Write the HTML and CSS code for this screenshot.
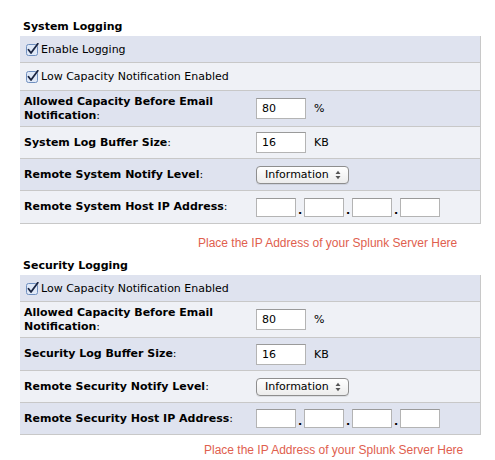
FILE: index.html
```html
<!DOCTYPE html>
<html>
<head>
<meta charset="utf-8">
<link rel="stylesheet" href="styles.css">
</head>
<body>
<section class="group">
  <h2 class="group-title">System Logging</h2>
  <div class="panel">
    <div class="row row-dark row-check">
      <label class="check"><svg class="cb" viewBox="0 0 13 13" width="13" height="13"><rect x="0.5" y="1.5" width="11" height="11" rx="2" fill="#dfe8f7" stroke="#6f8fbf"/><path d="M2.5 6.8 L5 10 L11.8 0.8" fill="none" stroke="#1a2440" stroke-width="1.8" stroke-linecap="round" stroke-linejoin="round"/></svg>Enable Logging</label>
    </div>
    <div class="row row-light row-check row-plus">
      <label class="check"><svg class="cb" viewBox="0 0 13 13" width="13" height="13"><rect x="0.5" y="1.5" width="11" height="11" rx="2" fill="#dfe8f7" stroke="#6f8fbf"/><path d="M2.5 6.8 L5 10 L11.8 0.8" fill="none" stroke="#1a2440" stroke-width="1.8" stroke-linecap="round" stroke-linejoin="round"/></svg>Low Capacity Notification Enabled</label>
    </div>
    <div class="row row-dark row-tall">
      <div class="label"><b>Allowed Capacity Before Email</b> <span class="nowrap"><b>Notification</b>:</span></div>
      <div class="value"><span class="field">80</span><span class="unit">%</span></div>
    </div>
    <div class="row row-light">
      <div class="label"><b>System Log Buffer Size</b>:</div>
      <div class="value"><span class="field">16</span><span class="unit">KB</span></div>
    </div>
    <div class="row row-dark">
      <div class="label"><b>Remote System Notify Level</b>:</div>
      <div class="value"><span class="select">Information<svg class="arrows" viewBox="0 0 6 10" width="6" height="10"><path d="M0.5 4 L3 0.8 L5.5 4 Z M0.5 6 L3 9.2 L5.5 6 Z" fill="#555"/></svg></span></div>
    </div>
    <div class="row row-light row-plus">
      <div class="label"><b>Remote System Host IP Address</b>:</div>
      <div class="value ip"><span class="octet"></span><span class="dot">.</span><span class="octet"></span><span class="dot">.</span><span class="octet"></span><span class="dot">.</span><span class="octet"></span></div>
    </div>
  </div>
  <p class="hint hint-1">Place the IP Address of your Splunk Server Here</p>
</section>

<section class="group">
  <h2 class="group-title">Security Logging</h2>
  <div class="panel">
    <div class="row row-dark row-check">
      <label class="check"><svg class="cb" viewBox="0 0 13 13" width="13" height="13"><rect x="0.5" y="1.5" width="11" height="11" rx="2" fill="#dfe8f7" stroke="#6f8fbf"/><path d="M2.5 6.8 L5 10 L11.8 0.8" fill="none" stroke="#1a2440" stroke-width="1.8" stroke-linecap="round" stroke-linejoin="round"/></svg>Low Capacity Notification Enabled</label>
    </div>
    <div class="row row-light row-tall">
      <div class="label"><b>Allowed Capacity Before Email</b> <span class="nowrap"><b>Notification</b>:</span></div>
      <div class="value"><span class="field">80</span><span class="unit">%</span></div>
    </div>
    <div class="row row-dark row-plus">
      <div class="label"><b>Security Log Buffer Size</b>:</div>
      <div class="value"><span class="field">16</span><span class="unit">KB</span></div>
    </div>
    <div class="row row-light">
      <div class="label"><b>Remote Security Notify Level</b>:</div>
      <div class="value"><span class="select">Information<svg class="arrows" viewBox="0 0 6 10" width="6" height="10"><path d="M0.5 4 L3 0.8 L5.5 4 Z M0.5 6 L3 9.2 L5.5 6 Z" fill="#555"/></svg></span></div>
    </div>
    <div class="row row-dark">
      <div class="label"><b>Remote Security Host IP Address</b>:</div>
      <div class="value ip"><span class="octet"></span><span class="dot">.</span><span class="octet"></span><span class="dot">.</span><span class="octet"></span><span class="dot">.</span><span class="octet"></span></div>
    </div>
  </div>
  <p class="hint hint-2">Place the IP Address of your Splunk Server Here</p>
</section>
</body>
</html>
```

FILE: styles.css
```css
html, body {
  margin: 0;
  padding: 0;
  background: #ffffff;
}

body {
  font-family: "DejaVu Sans", Verdana, sans-serif;
  font-size: 11px;
  color: #000;
  padding-top: 19px;
}

.group {
  margin: 0;
}

.group-title {
  margin: 0 0 1px 23px;
  font-size: 11px;
  font-weight: bold;
  line-height: 16px;
}

.panel {
  margin-left: 20px;
  width: 460px;
  border-right: 1px solid #c8c8c8;
}

.row {
  display: flex;
  align-items: center;
  height: 31px;
  border-bottom: 1px solid #c8c8c8;
}

.row-check {
  height: 26px;
}

.row-tall {
  height: 35px;
}

.row.row-plus {
  height: 32px;
}

.row-check.row-plus {
  height: 27px;
}

.row-dark {
  background: #dfe3ef;
}

.row-light {
  background: #eff1f6;
}

.check {
  display: flex;
  align-items: center;
  padding-left: 6px;
}

.cb {
  margin-right: 2px;
}

.label {
  width: 232px;
  padding-left: 4px;
  line-height: 14px;
}

.nowrap {
  white-space: nowrap;
}

.value {
  display: flex;
  align-items: center;
}

.field {
  box-sizing: border-box;
  width: 50px;
  height: 21px;
  border: 1px solid #b4b4b4;
  border-top-color: #9a9a9a;
  background: #fff;
  padding: 2px 0 0 5px;
  font-size: 11px;
  line-height: 15px;
}

.unit {
  margin-left: 8px;
}

.select {
  box-sizing: border-box;
  display: flex;
  align-items: center;
  justify-content: space-between;
  width: 93px;
  height: 18px;
  padding: 0 7px 0 8px;
  border: 1px solid #8e8e8e;
  border-radius: 4px;
  background: linear-gradient(#ffffff, #ececec);
  box-shadow: 0 1px 0 rgba(0,0,0,0.08);
  font-size: 11px;
}

.octet {
  box-sizing: border-box;
  width: 40px;
  height: 19px;
  border: 1px solid #b4b4b4;
  border-top-color: #9a9a9a;
  background: #fff;
}

.dot {
  width: 8px;
  text-align: center;
  font-weight: bold;
  align-self: flex-end;
  line-height: 12px;
}

.hint {
  margin: 11px 0 0 0;
  font-family: "Liberation Sans", Arial, sans-serif;
  font-size: 12px;
  line-height: 16px;
  color: #e0604e;
}

.hint-1 {
  padding-left: 198px;
  margin-bottom: 7px;
}

.hint-2 {
  margin-top: 7px;
  padding-left: 204px;
}
```
